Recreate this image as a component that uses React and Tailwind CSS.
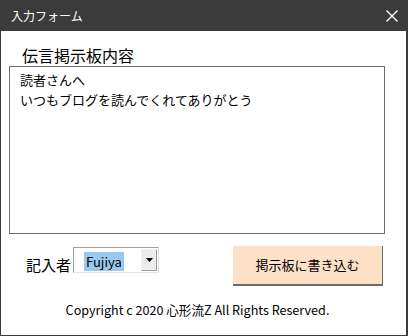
export default function App() {
  return (
    <div
      className="flex h-[336px] w-[408px] flex-col bg-[#3b3b3b] text-black"
      style={{ fontFamily: '"Noto Sans CJK JP", "Noto Sans", sans-serif' }}
    >
      <div className="flex h-[31px] items-center justify-between pl-[11px] pr-[10px] text-white">
        <span className="text-[12px] leading-none">入力フォーム</span>
        <svg width="12" height="12" viewBox="0 0 12 12" stroke="white" strokeWidth="1.3">
          <path d="M0.5 0.5 L11.5 11.5 M11.5 0.5 L0.5 11.5" />
        </svg>
      </div>
      <div className="mx-[1px] mb-[1px] mr-[2px] flex flex-1 flex-col bg-white">
        <div className="pl-[21px] pt-[14px] text-[16px] leading-[21px]">伝言掲示板内容</div>
        <div className="ml-[8px] mr-[21px] h-[168px] border border-[#6a6a6a] px-[10px] pt-[3px] text-[13px] leading-[20px]">
          <div>読者さんへ</div>
          <div>いつもブログを読んでくれてありがとう</div>
        </div>
        <div className="mt-[12px] flex items-start">
          <div className="mt-[9px] pl-[25px] text-[15px] leading-[20px]">記入者</div>
          <div className="ml-[2px] mt-[1px] flex h-[26px] w-[86px] items-center border border-[#a0a0a0] border-b-[#e3e3e3] border-r-[#e3e3e3]">
            <div className="flex-1 pl-[10px]">
              <span className="bg-[#99c9ef] px-[2px] text-[13px] leading-[17px]">Fujiya</span>
            </div>
            <div className="mr-[1px] flex h-[22px] w-[16px] items-center justify-center border border-[#f0f0f0] border-b-[#9c9c9c] border-r-[#9c9c9c] bg-[#ececec]">
              <svg width="7" height="4" viewBox="0 0 7 4">
                <path d="M0 0 H7 L3.5 4 Z" fill="black" />
              </svg>
            </div>
          </div>
          <button className="ml-[74px] flex h-[40px] w-[150px] items-center justify-center border-b-2 border-r border-[#6c6c6c] bg-[#fde1c6] text-[13px]">
            掲示板に書き込む
          </button>
        </div>
        <div className="mt-[16px] pr-[12px] text-center text-[12.6px] leading-[16px]">
          Copyright c 2020 心形流Z All Rights Reserved.
        </div>
      </div>
    </div>
  )
}
